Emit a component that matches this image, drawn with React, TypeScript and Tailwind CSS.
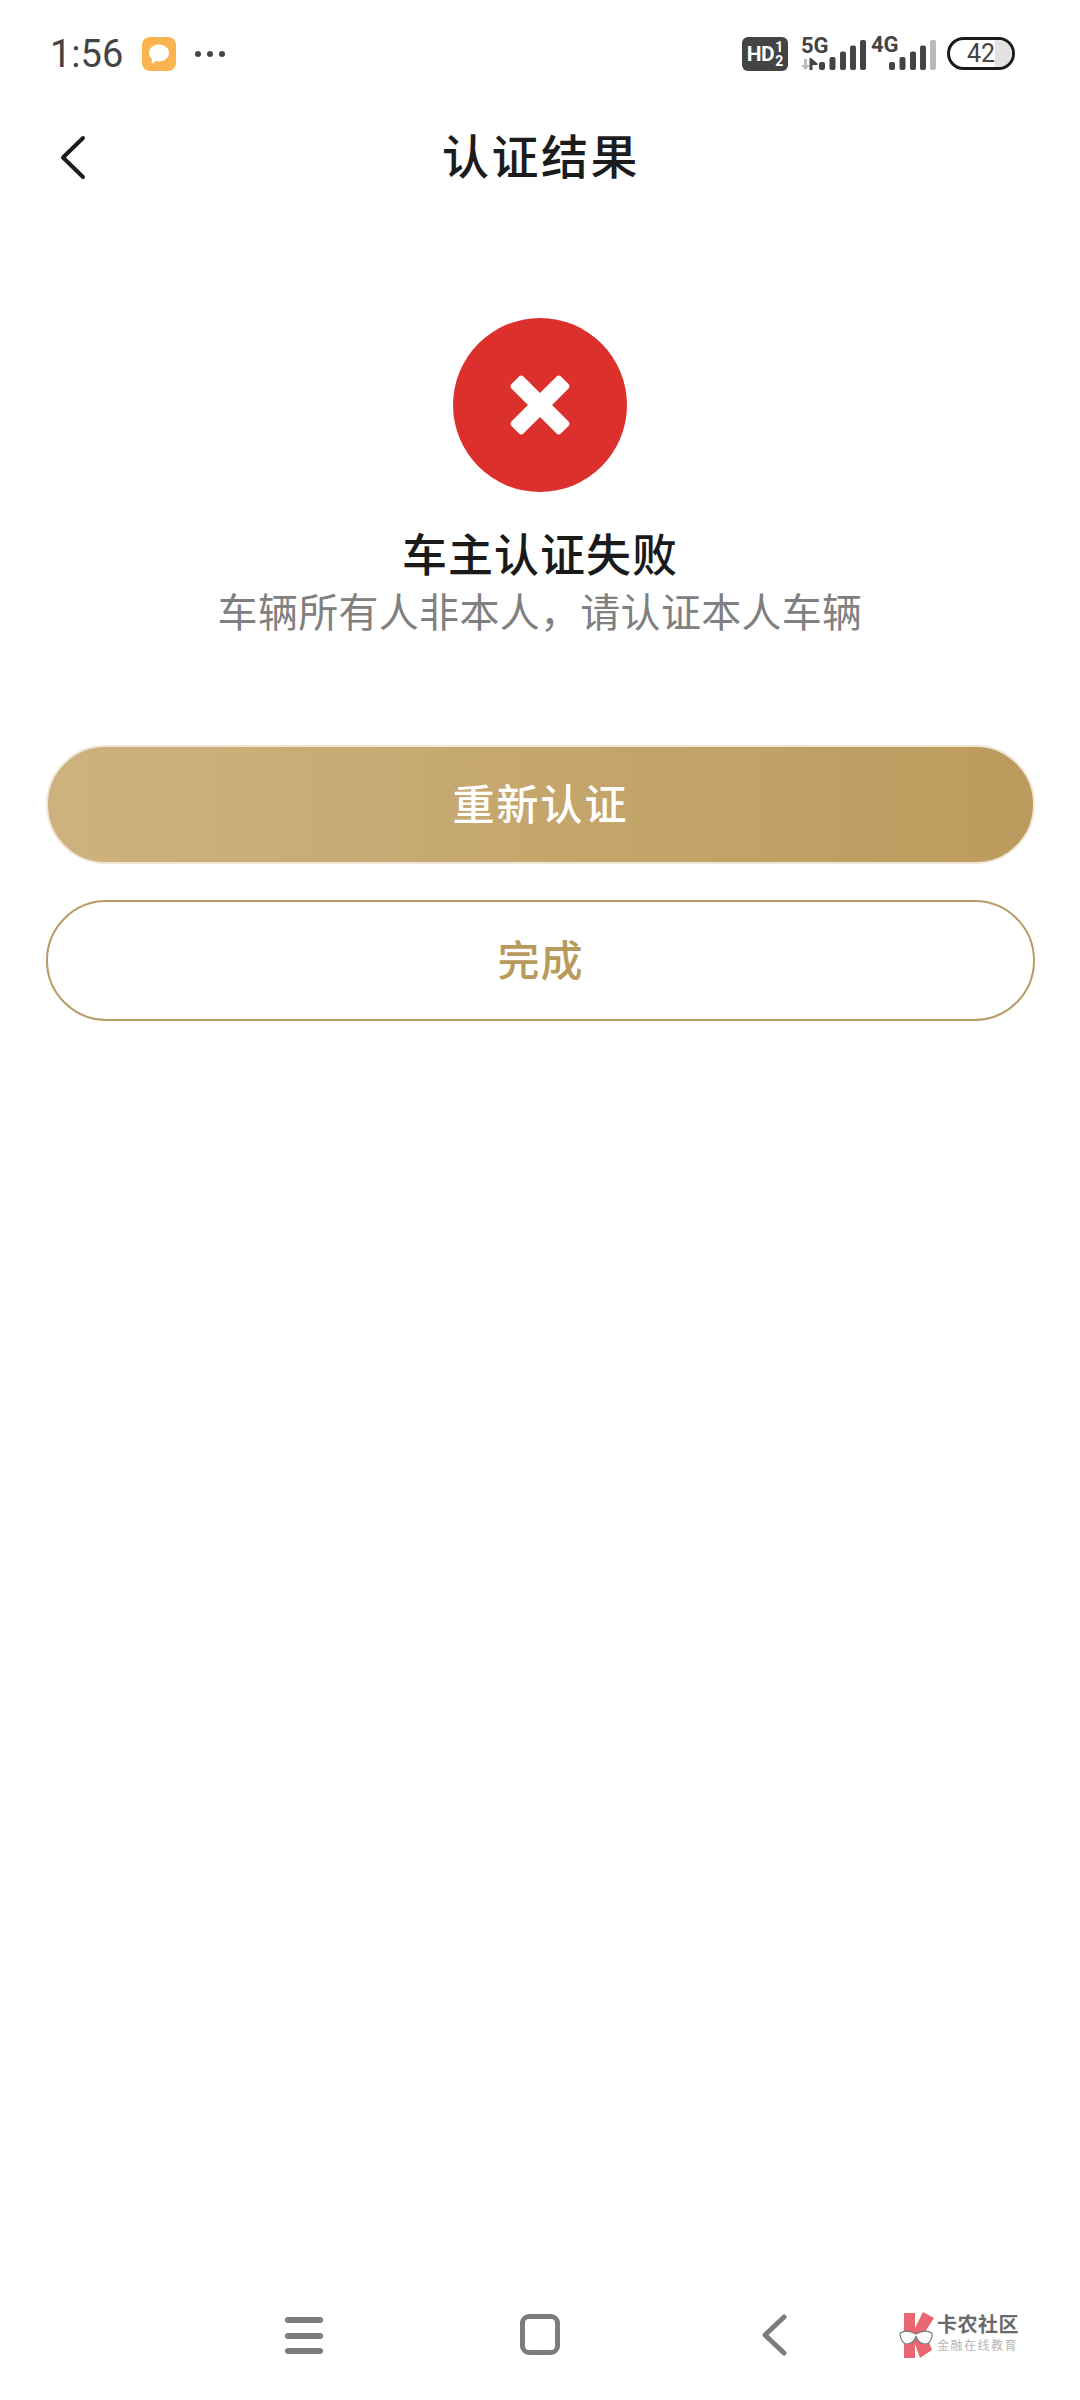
const cjk = "font-['Noto_Sans_CJK_SC','Noto_Sans',sans-serif]";

// Mobile signal meter: five rising bars, dimmed ones drawn in light grey.
function SignalBars({ dimLast, arrows }: { dimLast?: boolean; arrows?: boolean }) {
  const bars = [
    { x: 0, top: 22 },
    { x: 10.5, top: 17 },
    { x: 21, top: 11.5 },
    { x: 31, top: 5.5 },
    { x: 41, top: 0 },
  ];
  return (
    <svg width={arrows ? 66 : 47} height="30" viewBox={arrows ? "-19 0 66 30" : "0 0 47 30"}>
      {arrows && (
        <g>
          <path d="M-15 19h3v6h3l-4.500 5l-4.500-5h3z" fill="#bdbdbd" />
          <path d="M-6.500 30h-3v-12h1.500l6.500 5.500v1.500h-5z" fill="#444" />
        </g>
      )}
      {bars.map((b, i) => (
        <rect
          key={b.x}
          x={b.x}
          y={b.top}
          width="6"
          height={30 - b.top}
          rx="2"
          fill={dimLast && i === 4 ? "#b9b9b9" : "#444"}
        />
      ))}
    </svg>
  );
}

function StatusBar() {
  return (
    <div className="flex h-[108px] items-start pl-[50px] pr-[65px] pt-[37px]">
      <span className="font-['Roboto',sans-serif] text-[38px] leading-[34px] text-[#444]">1:56</span>
      <div className="ml-[19px] flex h-[34px] w-[34px] items-center justify-center rounded-[8px] bg-[#fbb350]">
        <svg width="26" height="24" viewBox="0 0 26 24">
          <path d="M13 2.500c5.800 0 10 3.600 10 8.500s-4.200 8.500-10 8.500c-1 0-2-.1-3-.4l-3.800 2.400c-.4.200-.8-.1-.7-.5l.7-3.600c-2-1.600-3.200-3.800-3.200-6.400c0-4.900 4.200-8.500 10-8.500z" fill="#fff" />
        </svg>
      </div>
      <div className="ml-[19px] mt-[14px] flex gap-[6px]">
        <span className="h-[6px] w-[6px] rounded-full bg-[#444]" />
        <span className="h-[6px] w-[6px] rounded-full bg-[#444]" />
        <span className="h-[6px] w-[6px] rounded-full bg-[#444]" />
      </div>

      <div className="ml-auto flex items-start">
        <div className="flex h-[34px] w-[46px] items-center justify-center gap-[1px] rounded-[6px] bg-[#444] font-['Roboto',sans-serif] font-bold text-white">
          <span className="text-[21px] leading-none tracking-[-0.5px]">HD</span>
          <span className="flex flex-col items-center text-[14px] leading-[14px]">
            <span>1</span>
            <span>2</span>
          </span>
        </div>

        <div className="relative ml-[11px] h-[34px] w-[66px]">
          <span className="absolute left-[2px] top-[-2px] font-['Roboto',sans-serif] text-[22px] font-bold leading-[22px] text-[#444]">5G</span>
          <div className="absolute bottom-[1px] left-[1px]">
            <SignalBars arrows />
          </div>
        </div>

        <div className="relative ml-[6px] h-[34px] w-[66px]">
          <span className="absolute left-0 top-[-3px] font-['Roboto',sans-serif] text-[22px] font-bold leading-[22px] text-[#444]">4G</span>
          <div className="absolute bottom-[1px] left-[18px]">
            <SignalBars dimLast />
          </div>
        </div>

        <div className="relative ml-[10px] flex h-[33px] w-[68px] items-center justify-center overflow-hidden rounded-full border-[3.500px] border-[#1b1b1b]">
          <span className="absolute bottom-0 right-0 top-0 w-[17px] bg-[#e2e2e2]" />
          <span className="relative font-['Roboto',sans-serif] text-[25px] leading-none text-[#444]">42</span>
        </div>
      </div>
    </div>
  );
}

function TitleBar() {
  return (
    <div className="relative flex h-[90px] items-center justify-center">
      <svg className="absolute left-[58px] top-[26px]" width="30" height="46" viewBox="0 0 30 46">
        <path d="M25 4L5 23.500L25 43" fill="none" stroke="#1c1c1c" strokeWidth="4" strokeLinecap="round" strokeLinejoin="round" />
      </svg>
      <h1 className={`${cjk} pl-[2px] text-[47px] font-medium leading-none tracking-[2.500px] text-[#1c1c1c]`}>认证结果</h1>
    </div>
  );
}

function FailedMark() {
  return (
    <div className="flex h-[174px] w-[174px] items-center justify-center rounded-full bg-[#dc302c]">
      <svg width="64" height="64" viewBox="0 0 64 64">
        <g fill="#fff" transform="rotate(45 32 32)">
          <rect x="-3" y="23.500" width="70" height="17" rx="3.500" />
          <rect x="23.500" y="-3" width="17" height="70" rx="3.500" />
        </g>
      </svg>
    </div>
  );
}

function NavBar() {
  return (
    <div className="relative mt-auto flex h-[100px] items-start pl-[285px] pt-[14px]">
      <div className="mt-[3px] flex h-[37px] w-[38px] flex-col justify-between">
        <span className="h-[6px] rounded-full bg-[#7c7c7c]" />
        <span className="h-[6px] rounded-full bg-[#7c7c7c]" />
        <span className="h-[6px] rounded-full bg-[#7c7c7c]" />
      </div>
      <div className="ml-[197px] h-[41px] w-[40px] rounded-[9px] border-[5px] border-[#7c7c7c]" />
      <svg className="ml-[200px]" width="28" height="42" viewBox="0 0 28 42">
        <path d="M24 3L5 21L24 39" fill="none" stroke="#7c7c7c" strokeWidth="5" strokeLinecap="round" strokeLinejoin="round" />
      </svg>

      {/* community watermark */}
      <div className="absolute left-[899px] top-[12px] flex items-start">
        <svg width="36" height="48" viewBox="0 0 36 48">
          <path d="M5 1H16V16L24 0L35 6L26 20L33 38L21 46L16 32V46H5z" fill="#ea6673" />
          <path d="M1 21C6 18 12 19 17 22C22 19 28 18 33 21C34 27 30 32 26 32C21 32 18 28 17 24C16 28 13 32 8 32C4 32 1 27 1 21z" fill="#fff" stroke="#7c7c7c" strokeWidth="1.200" />
        </svg>
        <div className={`${cjk} ml-[2px] flex flex-col`}>
          <span className="text-[20px] font-bold leading-[24px] tracking-[0.5px] text-[#6a6a6a]">卡农社区</span>
          <span className="mt-[1px] text-[12px] leading-[16px] tracking-[1.500px] text-[#b5b5b5]">金融在线教育</span>
        </div>
      </div>
    </div>
  );
}

export default function App() {
  return (
    <div className="flex h-[2400px] w-[1080px] flex-col bg-white">
      <StatusBar />
      <TitleBar />

      <div className="flex flex-col items-center pt-[120px]">
        <FailedMark />
        <h2 className={`${cjk} mt-[36px] text-[45px] font-medium leading-[50px] tracking-[1px] text-[#1a1a1a]`}>车主认证失败</h2>
        <p className={`${cjk} mt-[7px] text-[40px] leading-[50px] tracking-[0.3px] text-[#808080]`}>车辆所有人非本人，请认证本人车辆</p>
      </div>

      <div className="flex flex-col gap-[36px] pl-[46px] pr-[45px] pt-[110px]">
        <button className={`${cjk} h-[119px] rounded-full border-2 border-[#efe6d6] bg-gradient-to-r from-[#ceb27e] to-[#bb9b5d] pb-[7px] text-[42px] font-medium tracking-[2px] text-white`}>
          重新认证
        </button>
        <button className={`${cjk} h-[121px] rounded-full border-2 border-[#b69c65] bg-white pb-[6px] text-[42px] font-medium tracking-[1px] text-[#b89a5d]`}>
          完成
        </button>
      </div>

      <NavBar />
    </div>
  );
}
